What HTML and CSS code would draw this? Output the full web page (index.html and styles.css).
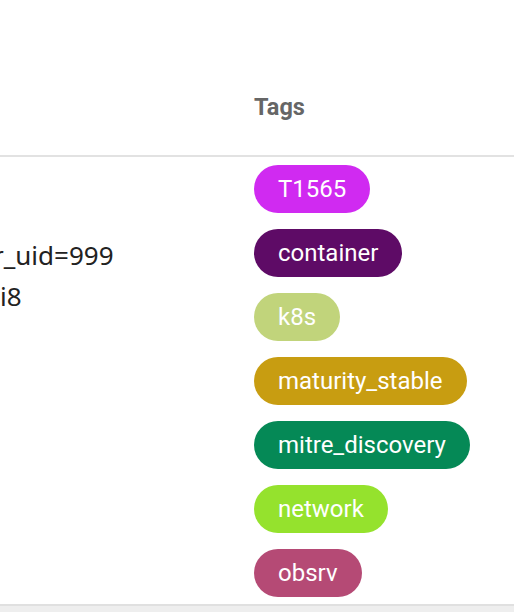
FILE: index.html
```html
<!DOCTYPE html>
<html lang="en">
<head>
<meta charset="utf-8">
<title>Tags</title>
<link rel="stylesheet" href="styles.css">
</head>
<body>
<div class="table">
  <div class="row head">
    <div class="cell"></div>
    <div class="cell th">Tags</div>
  </div>
  <div class="row body">
    <div class="cell desc">
      <div class="line first">r_uid=999</div>
      <div class="line">i8</div>
    </div>
    <div class="cell tags">
      <span class="tag t-purple">T1565</span>
      <span class="tag t-plum">container</span>
      <span class="tag t-olive">k8s</span>
      <span class="tag t-gold">maturity_stable</span>
      <span class="tag t-green">mitre_discovery</span>
      <span class="tag t-lime">network</span>
      <span class="tag t-rose">obsrv</span>
    </div>
  </div>
  <div class="footer"></div>
</div>
</body>
</html>
```

FILE: styles.css
```css
html, body {
  margin: 0;
  padding: 0;
  background: #ffffff;
  overflow: hidden;
}

.table {
  width: 514px;
  height: 612px;
  display: flex;
  flex-direction: column;
}

.row {
  display: grid;
  grid-template-columns: 238px 1fr;
}

.head {
  height: 155px;
  border-bottom: 2px solid #e2e2e2;
}

.th {
  padding: 93px 16px 0;
  font-family: Roboto, "Liberation Sans", sans-serif;
  font-weight: 700;
  font-size: 23.5px;
  line-height: 28px;
  color: #666666;
}

.body {
  border-bottom: 2px solid #e0e0e0;
}

.desc {
  padding-top: 78px;
  font-family: "Noto Sans", "Open Sans", sans-serif;
  font-size: 26px;
  line-height: 41px;
  color: #222222;
  white-space: nowrap;
}

.line.first {
  text-indent: -7px;
}

.tags {
  display: flex;
  flex-direction: column;
  align-items: flex-start;
  gap: 16px;
  padding: 8px 16px 7px;
}

.tag {
  display: inline-block;
  height: 48px;
  line-height: 48px;
  padding: 0 24px;
  border-radius: 24px;
  font-family: Roboto, "Liberation Sans", sans-serif;
  font-size: 24px;
  color: #ffffff;
  white-space: nowrap;
}

.t-purple { background: #d02af1; }
.t-plum { background: #5e0b66; }
.t-olive { background: #c1d47b; }
.t-gold { background: #c89d11; }
.t-green { background: #058956; }
.t-lime { background: #95e22d; }
.t-rose { background: #b54a75; }

.footer {
  flex: 1;
  background: #eeeeee;
}
```
